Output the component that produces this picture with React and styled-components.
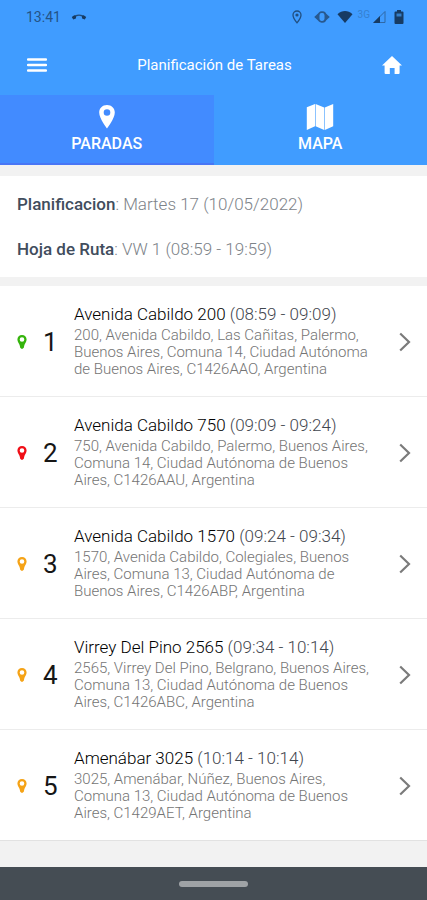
import React from "react";
import styled, { createGlobalStyle } from "styled-components";

const stops = [
  {
    name: "Avenida Cabildo 200",
    time: "(08:59 - 09:09)",
    address:
      "200, Avenida Cabildo, Las Cañitas, Palermo, Buenos Aires, Comuna 14, Ciudad Autónoma de Buenos Aires, C1426AAO, Argentina",
    color: "#35b40c",
  },
  {
    name: "Avenida Cabildo 750",
    time: "(09:09 - 09:24)",
    address:
      "750, Avenida Cabildo, Palermo, Buenos Aires, Comuna 14, Ciudad Autónoma de Buenos Aires, C1426AAU, Argentina",
    color: "#f00f17",
  },
  {
    name: "Avenida Cabildo 1570",
    time: "(09:24 - 09:34)",
    address:
      "1570, Avenida Cabildo, Colegiales, Buenos Aires, Comuna 13, Ciudad Autónoma de Buenos Aires, C1426ABP, Argentina",
    color: "#f5a317",
  },
  {
    name: "Virrey Del Pino 2565",
    time: "(09:34 - 10:14)",
    address:
      "2565, Virrey Del Pino, Belgrano, Buenos Aires, Comuna 13, Ciudad Autónoma de Buenos Aires, C1426ABC, Argentina",
    color: "#f5a317",
  },
  {
    name: "Amenábar 3025",
    time: "(10:14 - 10:14)",
    address:
      "3025, Amenábar, Núñez, Buenos Aires, Comuna 13, Ciudad Autónoma de Buenos Aires, C1429AET, Argentina",
    color: "#f5a317",
  },
];

function StatusBar() {
  return (
    <StatusWrapper>
      <StatusGroup>
        <span>13:41</span>
        <svg width="16" height="8" viewBox="0 0 16 8">
          <path
            d="M2 5C4.6 1.1 11.4 1.1 14 5"
            fill="none"
            stroke="#1f4c7c"
            strokeWidth="1.4"
          />
          <path
            d="M.8 4 3.3 2.2 5.2 3.3 4.9 5.5 2.2 6.5ZM15.2 4 12.7 2.2 10.8 3.3 11.1 5.5 13.8 6.5Z"
            fill="#173b63"
          />
        </svg>
      </StatusGroup>
      <StatusIcons>
        <svg width="10" height="14" viewBox="0 0 10 14">
          <path
            d="M5 1C2.7 1 1 2.7 1 4.9 1 7.8 5 12.8 5 12.8S9 7.8 9 4.9C9 2.7 7.3 1 5 1Z"
            fill="none"
            stroke="#214f80"
            strokeWidth="1.3"
          />
          <circle cx="5" cy="5" r="1.6" fill="#214f80" />
        </svg>
        <VibrateIcon width="16" height="14" viewBox="0 0 16 14">
          <path d="M4.6 3v8L.2 7ZM11.4 3v8L15.8 7Z" fill="#28598f" />
          <rect
            x="4.6"
            y="2.2"
            width="6.8"
            height="9.6"
            rx="3"
            fill="none"
            stroke="#28598f"
            strokeWidth="1.8"
          />
        </VibrateIcon>
        <svg width="16" height="14" viewBox="0 0 16 14">
          <path d="M.5 4.2C5-.2 11-.2 15.5 4.2L8 13Z" fill="#173b63" />
        </svg>
        <Network>3G</Network>
        <svg width="14" height="14" viewBox="0 0 14 14">
          <path
            d="M13 1.5V12.5H2Z"
            fill="none"
            stroke="#2f68a5"
            strokeWidth="1"
          />
          <path d="M1 13 8 6V13Z" fill="#173b63" />
        </svg>
        <svg width="10" height="14" viewBox="0 0 10 14">
          <path
            d="M3 0h4v1.5h1.5q1 0 1 1v10.5q0 1-1 1h-7q-1 0-1-1V2.5q0-1 1-1H3Z"
            fill="#173b63"
          />
          <path d="M2.5 3.5h5v3h-5Z" fill="#357fc9" />
        </svg>
      </StatusIcons>
    </StatusWrapper>
  );
}

function Header() {
  return (
    <HeaderWrapper>
      <IconButton aria-label="Menu">
        <svg width="20" height="14" viewBox="0 0 20 14">
          <path
            d="M1 1.5h18M1 7h18M1 12.5h18"
            stroke="#fff"
            strokeWidth="2.3"
            strokeLinecap="round"
          />
        </svg>
      </IconButton>
      <Title>Planificación de Tareas</Title>
      <IconButton aria-label="Inicio">
        <svg width="20" height="18" viewBox="0 0 20 18">
          <path
            d="M10 0 20 9.6H17.6V17q0 1-1 1H12.6V12H7.8V18H3.6q-1 0-1-1V9.6H0Z"
            fill="#fff"
          />
        </svg>
      </IconButton>
    </HeaderWrapper>
  );
}

function Stop(props) {
  return (
    <StopItem>
      <StopLink href="#">
        <svg width="10" height="14" viewBox="0 0 10 14">
          <path
            fillRule="evenodd"
            d="M5 0C2.3 0 .4 2 .4 4.6.4 7 2 8.2 2.6 10L3.2 12.8Q5 15 6.8 12.8L7.4 10C8 8.2 9.6 7 9.6 4.6 9.6 2 7.7 0 5 0ZM5 2.2A2.3 2.3 0 1 1 5 6.8 2.3 2.3 0 1 1 5 2.2Z"
            fill={props.color}
          />
        </svg>
        <Order>{props.order}</Order>
        <Details>
          <StopName>
            {props.name} <span>{props.time}</span>
          </StopName>
          <Address>{props.address}</Address>
        </Details>
        <svg width="12" height="20" viewBox="0 0 12 20">
          <path
            d="M1.2 1.5 10 10 1.2 18.5"
            fill="none"
            stroke="#7b7b7b"
            strokeWidth="2.2"
          />
        </svg>
      </StopLink>
    </StopItem>
  );
}

function App() {
  return (
    <Page>
      <GlobalStyle />
      <StatusBar />
      <Header />
      <Tabs>
        <Tab $active>
          <svg width="28" height="26" viewBox="0 0 28 26">
            <path
              fillRule="evenodd"
              d="M14 1C9.4 1 6.2 4.3 6.2 8.6 6.2 14.5 14 24.5 14 24.5S21.8 14.5 21.8 8.6C21.8 4.3 18.6 1 14 1ZM14 5.2A3.3 3.3 0 1 1 14 11.8 3.3 3.3 0 1 1 14 5.2Z"
              fill="#fff"
            />
          </svg>
          PARADAS
        </Tab>
        <Tab>
          <svg width="28" height="26" viewBox="0 0 28 26">
            <path
              d="M.8 3.2 9 0V22.2L.8 26ZM9.6 0 18.2 3.6V26L9.6 22.2ZM18.8 3.6 27.2 0V22.2L18.8 26Z"
              fill="#fff"
            />
          </svg>
          MAPA
        </Tab>
      </Tabs>
      <Summary>
        <p>
          <b>Planificacion</b>: Martes 17 (10/05/2022)
        </p>
        <p>
          <b>Hoja de Ruta</b>: VW 1 (08:59 - 19:59)
        </p>
      </Summary>
      <StopList>
        {stops.map((stop, index) => (
          <Stop key={stop.name} order={index + 1} {...stop} />
        ))}
      </StopList>
      <NavigationBar>
        <Handle />
      </NavigationBar>
    </Page>
  );
}

const GlobalStyle = createGlobalStyle`
  * {
    box-sizing: border-box;
  }
  body {
    margin: 0;
    background: #f2f2f2;
    font-family: Roboto, sans-serif;
  }
  svg {
    flex: none;
    display: block;
  }
`;
const Page = styled.div`
  min-height: 100vh;
  display: flex;
  flex-direction: column;
  background: #f2f2f2;
`;
const StatusWrapper = styled.div`
  height: 34px;
  padding: 0 23px 0 26px;
  display: flex;
  align-items: center;
  justify-content: space-between;
  background: #409cff;
  color: #245387;
  font-size: 14px;
`;
const StatusGroup = styled.div`
  display: flex;
  align-items: center;
  gap: 10px;
`;
const StatusIcons = styled.div`
  display: flex;
  align-items: center;
  gap: 8px;
`;
const VibrateIcon = styled.svg`
  margin: 0 -1px 0 4px;
`;
const Network = styled.span`
  margin: -6px -6px 0 -3px;
  font-size: 10px;
  color: #3580d0;
`;
const HeaderWrapper = styled.header`
  height: 61px;
  padding: 0 15px 0 17px;
  display: flex;
  align-items: center;
  justify-content: space-between;
  background: #409cff;
`;
const IconButton = styled.button`
  width: 40px;
  height: 40px;
  padding: 0;
  display: flex;
  align-items: center;
  justify-content: center;
  border: none;
  background: none;
  cursor: pointer;
`;
const Title = styled.h1`
  margin: 0;
  font-size: 15px;
  font-weight: 400;
  color: #fff;
`;
const Tabs = styled.nav`
  display: flex;
`;
const Tab = styled.button`
  flex: 1;
  height: 70px;
  padding: 9px 0 0;
  display: flex;
  flex-direction: column;
  align-items: center;
  gap: 4px;
  border: none;
  border-bottom: 2px solid ${(props) => (props.$active ? "#4876f5" : "#409cff")};
  background: ${(props) => (props.$active ? "#428bff" : "#409cff")};
  color: #fff;
  font-family: inherit;
  font-size: 16px;
  line-height: 20px;
  font-weight: 500;
  cursor: pointer;
`;
const Summary = styled.section`
  margin: 11px 0 9px;
  padding: 16px 17px;
  display: flex;
  flex-direction: column;
  gap: 21px;
  background: #fff;
  color: #7d8389;
  font-size: 17px;
  line-height: 24px;
  font-weight: 300;
  p {
    margin: 0;
  }
  b {
    font-weight: 500;
    color: #414d5d;
  }
`;
const StopList = styled.ol`
  margin: 0;
  padding: 0;
  list-style: none;
  background: #fff;
  border-bottom: 1px solid #e2e2e2;
`;
const StopItem = styled.li`
  & + & {
    border-top: 1px solid #ececec;
  }
`;
const StopLink = styled.a`
  padding: 2px 16px 0 17px;
  display: flex;
  align-items: center;
  text-decoration: none;
`;
const Order = styled.span`
  width: 47px;
  padding-left: 16px;
  font-size: 26px;
  line-height: 30px;
  color: #161616;
`;
const Details = styled.div`
  flex: 1;
  padding: 15px 22px 18px 0;
  display: flex;
  flex-direction: column;
  gap: 2px;
`;
const StopName = styled.div`
  font-size: 17px;
  line-height: 22px;
  font-weight: 300;
  color: #000;
  span {
    color: #3f464e;
  }
`;
const Address = styled.div`
  font-size: 15px;
  line-height: 17px;
  font-weight: 300;
  color: #747474;
`;
const NavigationBar = styled.footer`
  height: 33px;
  margin-top: auto;
  display: flex;
  align-items: center;
  justify-content: center;
  background: #454d54;
`;
const Handle = styled.div`
  width: 69px;
  height: 6px;
  border-radius: 3px;
  background: #9fa3a6;
`;

export default App;
